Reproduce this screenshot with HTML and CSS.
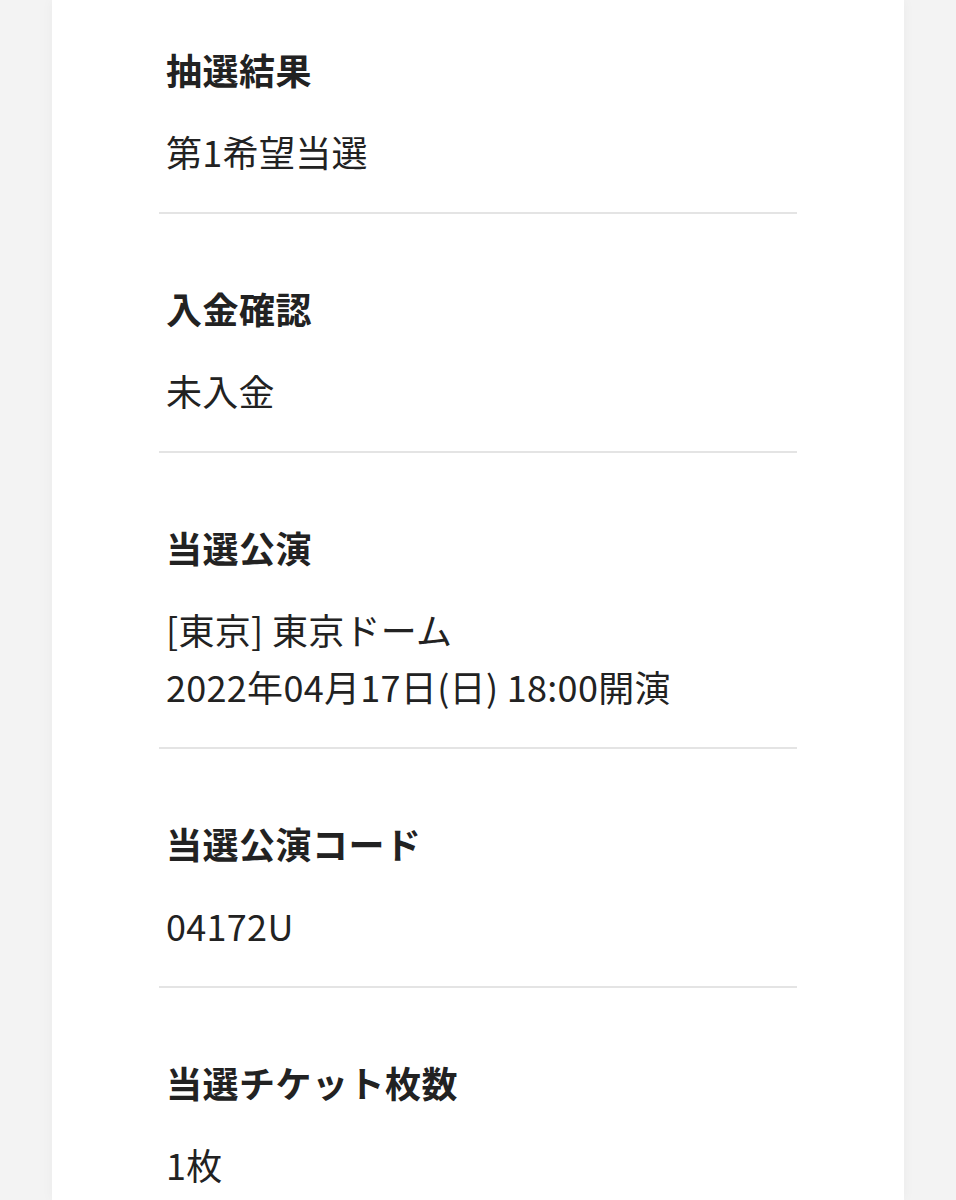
FILE: index.html
```html
<!DOCTYPE html>
<html lang="ja">
<head>
    <meta charset="UTF-8">
    <meta name="viewport" content="width=device-width, initial-scale=1.0">
    <title>抽選結果</title>
    <link rel="stylesheet" href="styles.css">
</head>
<body>
    <!-- Result panel -->
    <div class="panel">
        <dl class="result-list">
            <div class="result-item">
                <dt>抽選結果</dt>
                <dd>第1希望当選</dd>
            </div>
            <div class="result-item">
                <dt>入金確認</dt>
                <dd>未入金</dd>
            </div>
            <div class="result-item">
                <dt>当選公演</dt>
                <dd>[東京] 東京ドーム<br>2022年04月17日(日) 18:00開演</dd>
            </div>
            <div class="result-item">
                <dt>当選公演コード</dt>
                <dd>04172U</dd>
            </div>
            <div class="result-item">
                <dt>当選チケット枚数</dt>
                <dd>1枚</dd>
            </div>
        </dl>
    </div>
</body>
</html>
```

FILE: styles.css
```css
/* General Reset */
* {
    margin: 0;
    padding: 0;
    box-sizing: border-box;
}

body {
    background: #f3f3f3;
    font-family: "Noto Sans CJK JP", "Noto Sans", sans-serif;
    color: #222;
    overflow: hidden;
    height: 1200px;
}

/* Panel */
.panel {
    background: #fff;
    margin: 0 52px;
    height: 100%;
    box-shadow: 0 0 12px rgba(0, 0, 0, 0.04);
    padding-left: 107px;
    padding-right: 107px;
}

.result-item {
    padding: 66px 7px 32px;
    border-bottom: 2px solid #e4e4e4;
}

.result-item:first-child {
    padding-top: 41px;
}

.result-item:last-child {
    border-bottom: none;
}

.result-item dt {
    font-size: 36px;
    line-height: 56px;
    font-weight: 700;
    letter-spacing: 0.5px;
}

.result-item dd {
    margin-top: 26px;
    font-size: 36px;
    line-height: 57px;
    font-weight: 400;
    letter-spacing: 0.3px;
}
```
